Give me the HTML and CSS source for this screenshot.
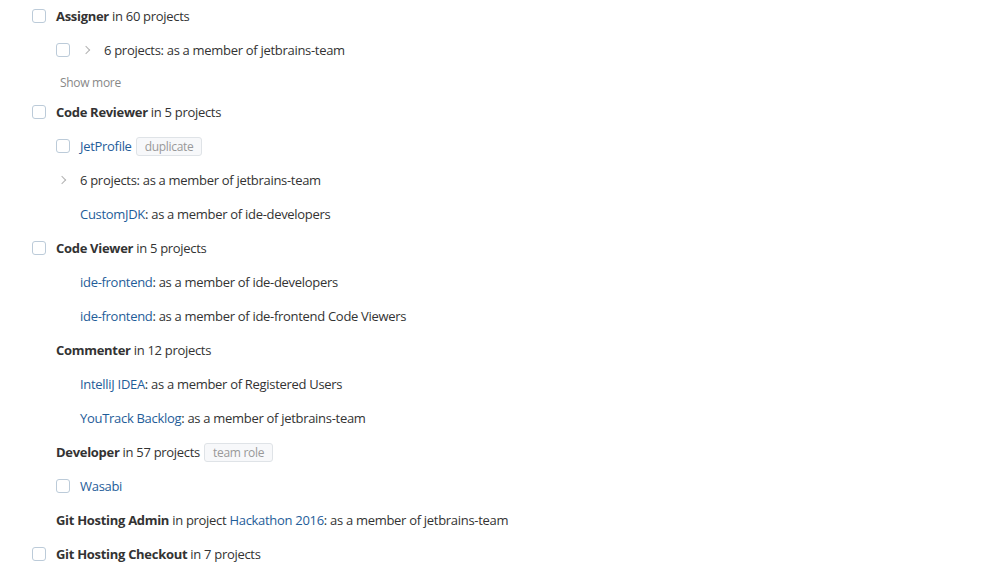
FILE: index.html
```html
<!DOCTYPE html>
<html>
<head>
<meta charset="utf-8">
<link rel="stylesheet" href="styles.css">
</head>
<body>
<div class="list">
  <div class="row top"><span class="cb"></span><span class="txt"><b>Assigner</b> in 60 projects</span></div>
  <div class="row sub"><span class="cb"></span><span class="chev"></span><span class="txt">6 projects: as a member of jetbrains-team</span></div>
  <div class="more">Show more</div>
  <div class="row top"><span class="cb"></span><span class="txt"><b>Code Reviewer</b> in 5 projects</span></div>
  <div class="row sub"><span class="cb"></span><span class="txt"><a>JetProfile</a></span><span class="badge">duplicate</span></div>
  <div class="row sub"><span class="chev"></span><span class="txt">6 projects: as a member of jetbrains-team</span></div>
  <div class="row sub"><span class="gap"></span><span class="txt"><a>CustomJDK</a>: as a member of ide-developers</span></div>
  <div class="row top"><span class="cb"></span><span class="txt"><b>Code Viewer</b> in 5 projects</span></div>
  <div class="row sub"><span class="gap"></span><span class="txt"><a>ide-frontend</a>: as a member of ide-developers</span></div>
  <div class="row sub"><span class="gap"></span><span class="txt"><a>ide-frontend</a>: as a member of ide-frontend Code Viewers</span></div>
  <div class="row top"><span class="gap"></span><span class="txt"><b>Commenter</b> in 12 projects</span></div>
  <div class="row sub"><span class="gap"></span><span class="txt"><a>IntelliJ IDEA</a>: as a member of Registered Users</span></div>
  <div class="row sub"><span class="gap"></span><span class="txt"><a>YouTrack Backlog</a>: as a member of jetbrains-team</span></div>
  <div class="row top"><span class="gap"></span><span class="txt"><b>Developer</b> in 57 projects</span><span class="badge">team role</span></div>
  <div class="row sub"><span class="cb"></span><span class="txt"><a>Wasabi</a></span></div>
  <div class="row top"><span class="gap"></span><span class="txt"><b>Git Hosting Admin</b> in project <a>Hackathon 2016</a>: as a member of jetbrains-team</span></div>
  <div class="row top"><span class="cb"></span><span class="txt"><b>Git Hosting Checkout</b> in 7 projects</span></div>
</div>
</body>
</html>
```
FILE: styles.css
```css
html, body { margin: 0; padding: 0; background: #fff; }
body {
  font-family: "Open Sans", "Noto Sans", sans-serif;
  font-size: 13px;
  letter-spacing: -0.3px;
  color: #333;
}
.list { margin-top: -1px; padding-left: 32px; }
.row {
  display: flex;
  align-items: center;
  height: 34px;
}
.sub { padding-left: 24px; }
.cb, .gap {
  flex: none;
  width: 14px;
  height: 14px;
  margin-right: 10px;
  box-sizing: border-box;
}
.cb {
  border: 1px solid #bccbd9;
  border-radius: 3px;
  background: #fff;
}
.chev {
  flex: none;
  width: 24px;
  height: 8px;
  position: relative;
}
.chev::before {
  content: "";
  position: absolute;
  left: 3px;
  top: 1px;
  width: 5px;
  height: 5px;
  border-right: 1px solid #b3b3b3;
  border-top: 1px solid #b3b3b3;
  transform: rotate(45deg);
}
.txt { white-space: nowrap; }
b { font-weight: 700; color: #333; }
a { color: #1f5d99; }
.badge {
  margin-left: 4px;
  height: 19px;
  line-height: 17px;
  box-sizing: border-box;
  padding: 0 8px;
  border: 1px solid #dfe3e7;
  border-radius: 3px;
  background: #f7f8fa;
  color: #999;
  font-size: 12px;
}
.more {
  height: 28px;
  padding-top: 3px;
  box-sizing: border-box;
  line-height: 26px;
  padding-left: 28px;
  color: #888;
  font-size: 12px;
}
```
